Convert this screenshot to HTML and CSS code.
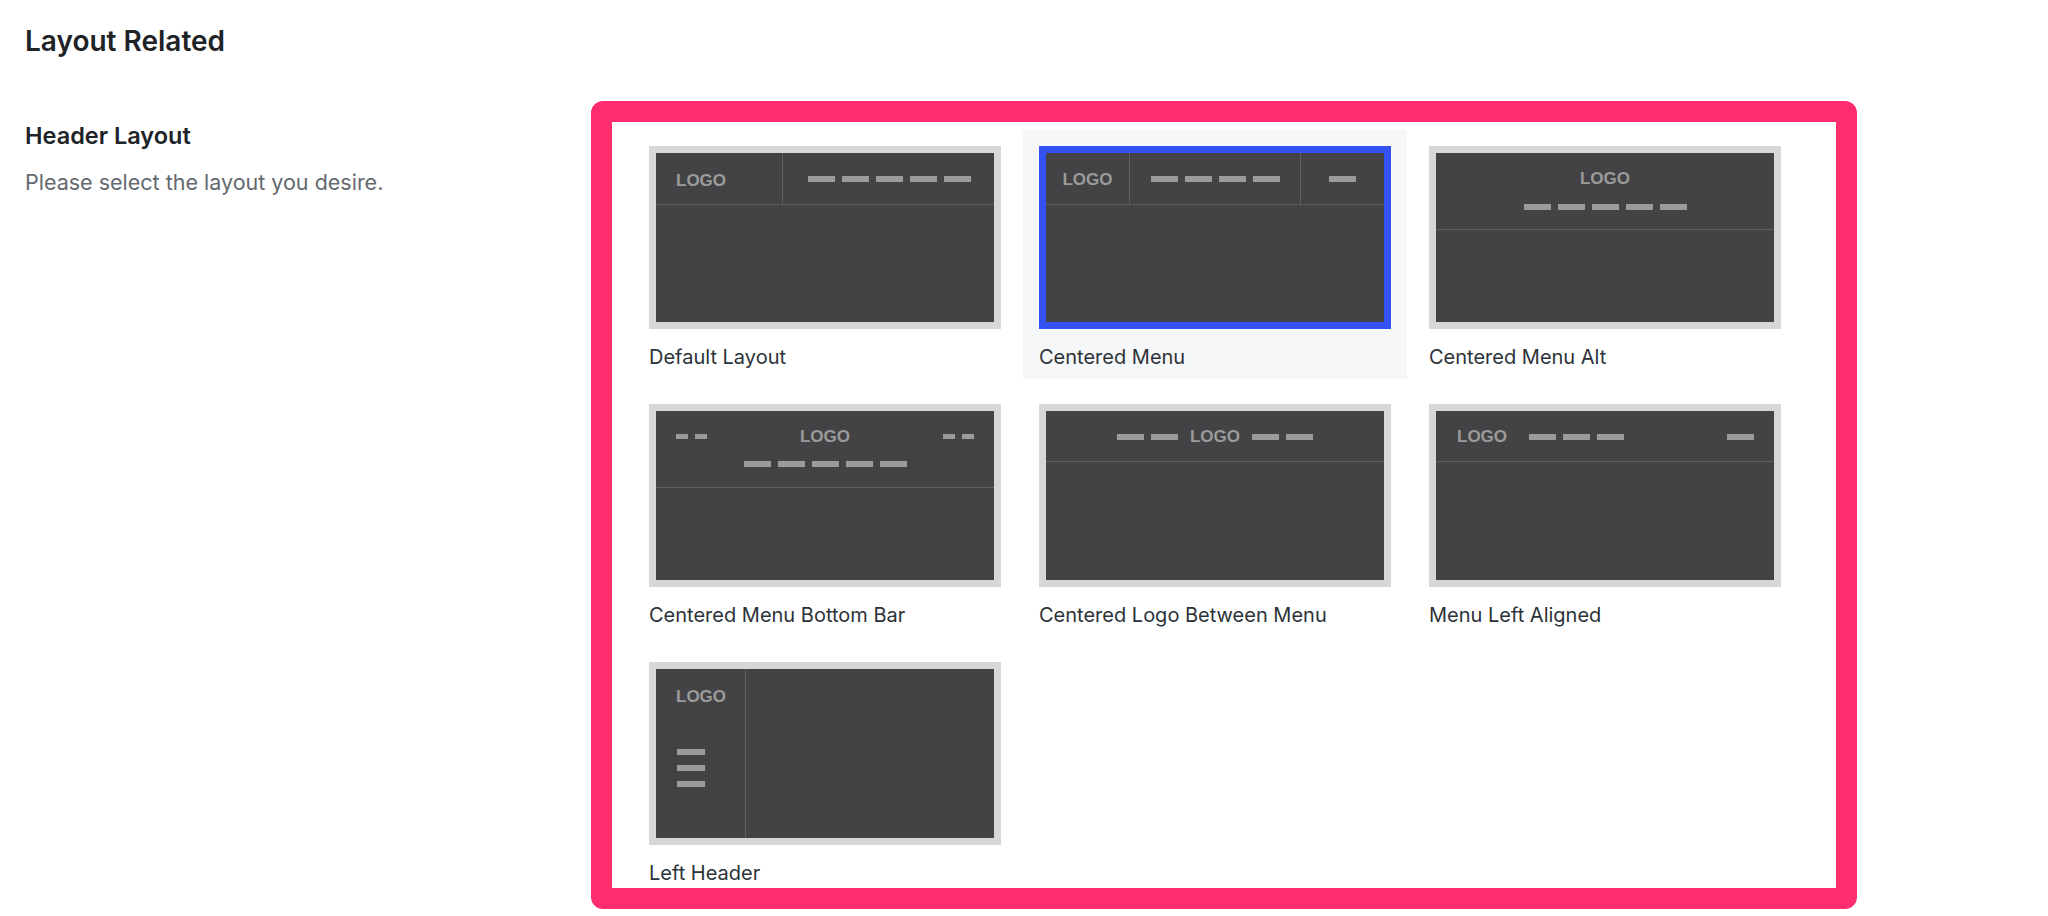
FILE: index.html
```html
<!DOCTYPE html>
<html lang="en">
<head>
<meta charset="utf-8">
<title>Layout Related</title>
<link rel="stylesheet" href="styles.css">
</head>
<body>
<h2 class="section-title">Layout Related</h2>

<div class="setting">
	<div class="setting-info">
		<h3>Header Layout</h3>
		<p>Please select the layout you desire.</p>
	</div>

	<div class="layout-box">
		<div class="layout-grid">

			<div class="layout-option">
				<div class="thumb t-default">
					<div class="bar">
						<div class="cell cell-logo"><span class="logo">LOGO</span></div>
						<div class="cell cell-menu"><div class="menu"><i></i><i></i><i></i><i></i><i></i></div></div>
					</div>
				</div>
				<span class="label">Default Layout</span>
			</div>

			<div class="layout-option selected">
				<div class="thumb t-centered">
					<div class="bar">
						<div class="cell cell-logo"><span class="logo">LOGO</span></div>
						<div class="cell cell-menu"><div class="menu"><i></i><i></i><i></i><i></i></div></div>
						<div class="cell cell-extra"><div class="menu"><i></i></div></div>
					</div>
				</div>
				<span class="label">Centered Menu</span>
			</div>

			<div class="layout-option">
				<div class="thumb t-alt">
					<div class="bar">
						<span class="logo">LOGO</span>
						<div class="menu"><i></i><i></i><i></i><i></i><i></i></div>
					</div>
				</div>
				<span class="label">Centered Menu Alt</span>
			</div>

			<div class="layout-option">
				<div class="thumb t-bottom">
					<div class="bar">
						<div class="top-row">
							<div class="menu small"><i></i><i></i></div>
							<span class="logo">LOGO</span>
							<div class="menu small"><i></i><i></i></div>
						</div>
						<div class="menu"><i></i><i></i><i></i><i></i><i></i></div>
					</div>
				</div>
				<span class="label">Centered Menu Bottom Bar</span>
			</div>

			<div class="layout-option">
				<div class="thumb t-between">
					<div class="bar">
						<div class="menu"><i></i><i></i></div>
						<span class="logo">LOGO</span>
						<div class="menu"><i></i><i></i></div>
					</div>
				</div>
				<span class="label">Centered Logo Between Menu</span>
			</div>

			<div class="layout-option">
				<div class="thumb t-left">
					<div class="bar">
						<span class="logo">LOGO</span>
						<div class="menu"><i></i><i></i><i></i></div>
						<div class="menu end"><i></i></div>
					</div>
				</div>
				<span class="label">Menu Left Aligned</span>
			</div>

			<div class="layout-option">
				<div class="thumb t-side">
					<div class="side">
						<span class="logo">LOGO</span>
						<div class="menu stack"><i></i><i></i><i></i></div>
					</div>
				</div>
				<span class="label">Left Header</span>
			</div>

		</div>
	</div>
</div>
</body>
</html>
```

FILE: styles.css
```css
body{
	margin: 0;
	padding: 0 24px 0 25px;
	background: #fff;
	font-family: Inter, "Noto Sans", sans-serif;
	color: #1d2327;
}

.section-title{
	margin: 0 0 42px;
	padding-top: 23px;
	font-size: 28px;
	line-height: 36px;
	font-weight: 600;
}

.setting{
	display: flex;
}

.setting-info{
	width: 566px;
	flex-shrink: 0;
	padding-top: 20px;
}

.setting-info h3{
	margin: 0 0 17px;
	font-size: 23.5px;
	line-height: 30px;
	font-weight: 600;
}

.setting-info p{
	margin: 0;
	font-size: 21.5px;
	line-height: 28px;
	color: #646970;
}

/*caixa destacada com as opcoes*/
.layout-box{
	width: 1266px;
	height: 808px;
	box-sizing: border-box;
	border: 21px solid #ff2d6d;
	border-radius: 12px;
	background: #fff;
	overflow: hidden;
}

.layout-grid{
	display: flex;
	flex-wrap: wrap;
	column-gap: 6px;
	row-gap: 9px;
	padding: 8px 0 0 21px;
}

.layout-option{
	width: 384px;
	box-sizing: border-box;
	padding: 16px 16px 10px;
	display: flex;
	flex-direction: column;
}

.layout-option.selected{
	background: #f6f7f9;
}

.label{
	margin-top: 16px;
	font-size: 20px;
	line-height: 24px;
	color: #2c3338;
}

/*miniaturas*/
.thumb{
	width: 352px;
	height: 183px;
	box-sizing: border-box;
	border: 7px solid #d6d7d9;
	background: #434345;
	display: flex;
	flex-direction: column;
	overflow: hidden;
}

.selected .thumb{
	border-color: #3451f2;
}

.bar{
	display: flex;
	align-items: center;
	height: 52px;
	box-sizing: border-box;
	border-bottom: 1px solid #5f5f61;
	flex-shrink: 0;
}

.cell{
	display: flex;
	align-items: center;
	height: 100%;
	box-sizing: border-box;
}

.logo{
	font-family: "Liberation Sans", Arial, sans-serif;
	font-weight: bold;
	font-size: 17px;
	line-height: 17px;
	color: #9b9b9b;
}

.menu{
	display: flex;
	gap: 7px;
}

.menu i{
	display: block;
	width: 27px;
	height: 6px;
	background: #9b9b9b;
}

.menu.small i{
	width: 12px;
	height: 5px;
}

/* default */
.t-default .cell-logo{
	width: 127px;
	padding: 4px 0 0 20px;
	border-right: 1px solid #5f5f61;
}

.t-default .cell-menu{
	flex: 1;
	justify-content: flex-end;
	padding-right: 23px;
}

/* centered menu */
.t-centered .cell{
	justify-content: center;
	border-right: 1px solid #5f5f61;
}

.t-centered .cell-logo{
	width: 84px;
	padding-top: 1px;
}

.t-centered .cell-menu{
	width: 171px;
}

.t-centered .cell-extra{
	flex: 1;
	border-right: 0;
}

/* centered menu alt */
.t-alt .bar{
	height: 77px;
	flex-direction: column;
	align-items: center;
	padding-top: 17px;
}

.t-alt .menu{
	margin-top: 17px;
}

/* bottom bar */
.t-bottom .bar{
	height: 77px;
	flex-direction: column;
	align-items: stretch;
	padding-top: 17px;
}

.top-row{
	display: flex;
	align-items: center;
	justify-content: space-between;
	padding: 0 20px;
}

.t-bottom .bar > .menu{
	align-self: center;
	margin-top: 16px;
}

/* logo between */
.t-between .bar{
	height: 51px;
	justify-content: center;
	gap: 12px;
	padding-top: 1px;
}

/* menu left */
.t-left .bar{
	height: 51px;
	padding: 1px 20px 0 21px;
}

.t-left .logo + .menu{
	margin-left: 22px;
}

.t-left .menu.end{
	margin-left: auto;
}

/* left header */
.t-side{
	flex-direction: row;
}

.side{
	width: 90px;
	border-right: 1px solid #5f5f61;
	padding: 19px 0 0 20px;
	box-sizing: border-box;
}

.side .logo{
	display: block;
}

.menu.stack{
	flex-direction: column;
	gap: 10px;
	margin: 44px 0 0 1px;
}

.menu.stack i{
	width: 28px;
}
```
